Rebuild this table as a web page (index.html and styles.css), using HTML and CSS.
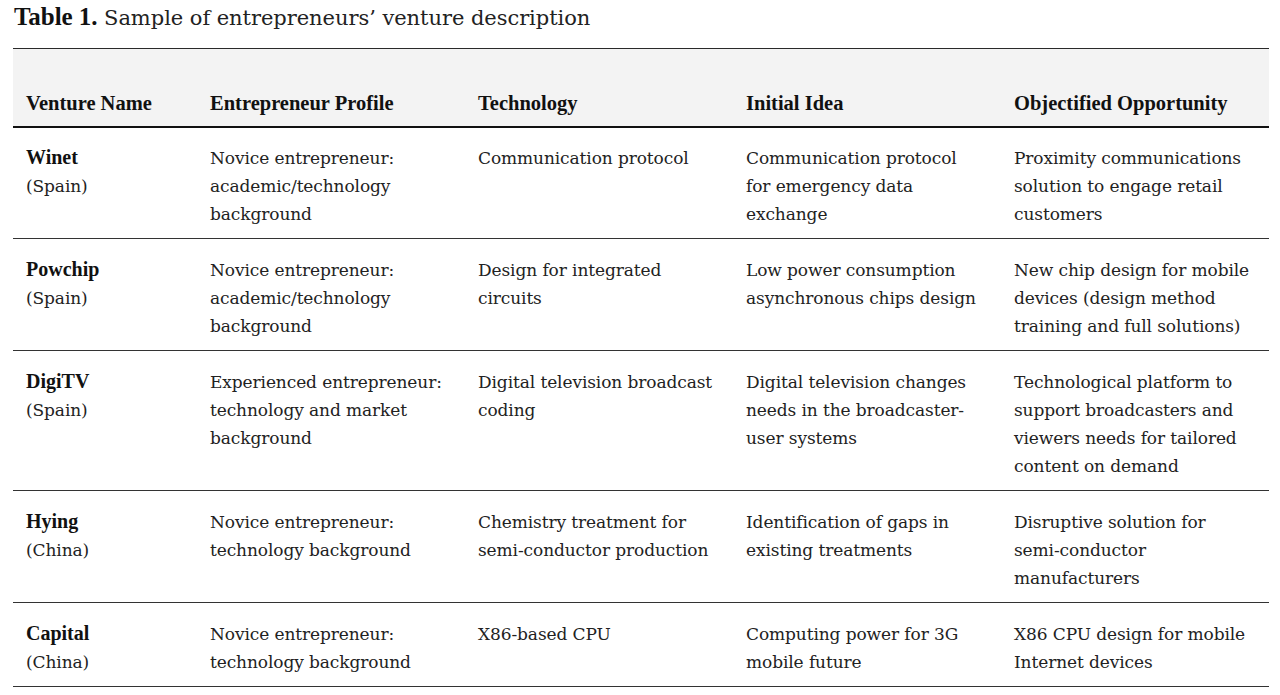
FILE: index.html
```html
<!DOCTYPE html>
<html lang="en">
<head>
<meta charset="utf-8">
<title>Table 1</title>
<link rel="stylesheet" href="styles.css">
</head>
<body>
<div class="page">
  <h1 class="caption"><span class="label">Table 1.</span> Sample of entrepreneurs’ venture description</h1>
  <table class="ventures">
    <colgroup>
      <col class="c-name">
      <col class="c-wide">
      <col class="c-wide">
      <col class="c-wide">
      <col class="c-wide">
    </colgroup>
    <thead>
      <tr>
        <th>Venture Name</th>
        <th>Entrepreneur Profile</th>
        <th>Technology</th>
        <th>Initial Idea</th>
        <th>Objectified Opportunity</th>
      </tr>
    </thead>
    <tbody>
      <tr>
        <td><b>Winet</b><br>(Spain)</td>
        <td>Novice entrepreneur:<br>academic/technology<br>background</td>
        <td>Communication protocol</td>
        <td>Communication protocol<br>for emergency data<br>exchange</td>
        <td>Proximity communications<br>solution to engage retail<br>customers</td>
      </tr>
      <tr>
        <td><b>Powchip</b><br>(Spain)</td>
        <td>Novice entrepreneur:<br>academic/technology<br>background</td>
        <td>Design for integrated<br>circuits</td>
        <td>Low power consumption<br>asynchronous chips design</td>
        <td>New chip design for mobile<br>devices (design method<br>training and full solutions)</td>
      </tr>
      <tr>
        <td><b>DigiTV</b><br>(Spain)</td>
        <td>Experienced entrepreneur:<br>technology and market<br>background</td>
        <td>Digital television broadcast<br>coding</td>
        <td>Digital television changes<br>needs in the broadcaster-<br>user systems</td>
        <td>Technological platform to<br>support broadcasters and<br>viewers needs for tailored<br>content on demand</td>
      </tr>
      <tr>
        <td><b>Hying</b><br>(China)</td>
        <td>Novice entrepreneur:<br>technology background</td>
        <td>Chemistry treatment for<br>semi-conductor production</td>
        <td>Identification of gaps in<br>existing treatments</td>
        <td>Disruptive solution for<br>semi-conductor<br>manufacturers</td>
      </tr>
      <tr>
        <td><b>Capital</b><br>(China)</td>
        <td>Novice entrepreneur:<br>technology background</td>
        <td>X86-based CPU</td>
        <td>Computing power for 3G<br>mobile future</td>
        <td>X86 CPU design for mobile<br>Internet devices</td>
      </tr>
    </tbody>
  </table>
</div>
</body>
</html>
```

FILE: styles.css
```css
html, body {
  margin: 0;
  padding: 0;
  background: #ffffff;
}

.page {
  padding: 2px 11px 0 13px;
  color: #1a1a1a;
  font-family: "DejaVu Serif", "Liberation Serif", serif;
}

.caption {
  margin: 0;
  height: 46px;
  font-size: 21px;
  font-weight: normal;
  line-height: 30px;
  color: #222;
  letter-spacing: -0.05px;
  padding-left: 1px;
}

.caption .label {
  font-family: "Liberation Serif", serif;
  font-weight: bold;
  font-size: 25px;
  color: #111;
}

.ventures {
  border-collapse: collapse;
  table-layout: fixed;
  width: 1256px;
  border-top: 1px solid #2a2a2a;
}

.c-name { width: 184px; }
.c-wide { width: 268px; }

.ventures th {
  background: #f3f3f3;
  height: 78px;
  box-sizing: border-box;
  padding: 0 4px 9px 13px;
  vertical-align: bottom;
  text-align: left;
  font-family: "Liberation Serif", serif;
  font-weight: bold;
  font-size: 20.5px;
  line-height: 28px;
  color: #111;
  border-bottom: 2px solid #111;
  letter-spacing: 0;
  white-space: nowrap;
}

.ventures td {
  padding: 16px 2px 10px 13px;
  vertical-align: top;
  font-size: 17px;
  line-height: 28px;
  color: #222;
  border-bottom: 1px solid #333;
  white-space: nowrap;
  letter-spacing: -0.1px;
}

.ventures tbody tr + tr td {
  padding-top: 17px;
}

.ventures td b {
  font-family: "Liberation Serif", serif;
  font-size: 20px;
  line-height: 27px;
  font-weight: bold;
  color: #111;
  letter-spacing: 0;
}
```
